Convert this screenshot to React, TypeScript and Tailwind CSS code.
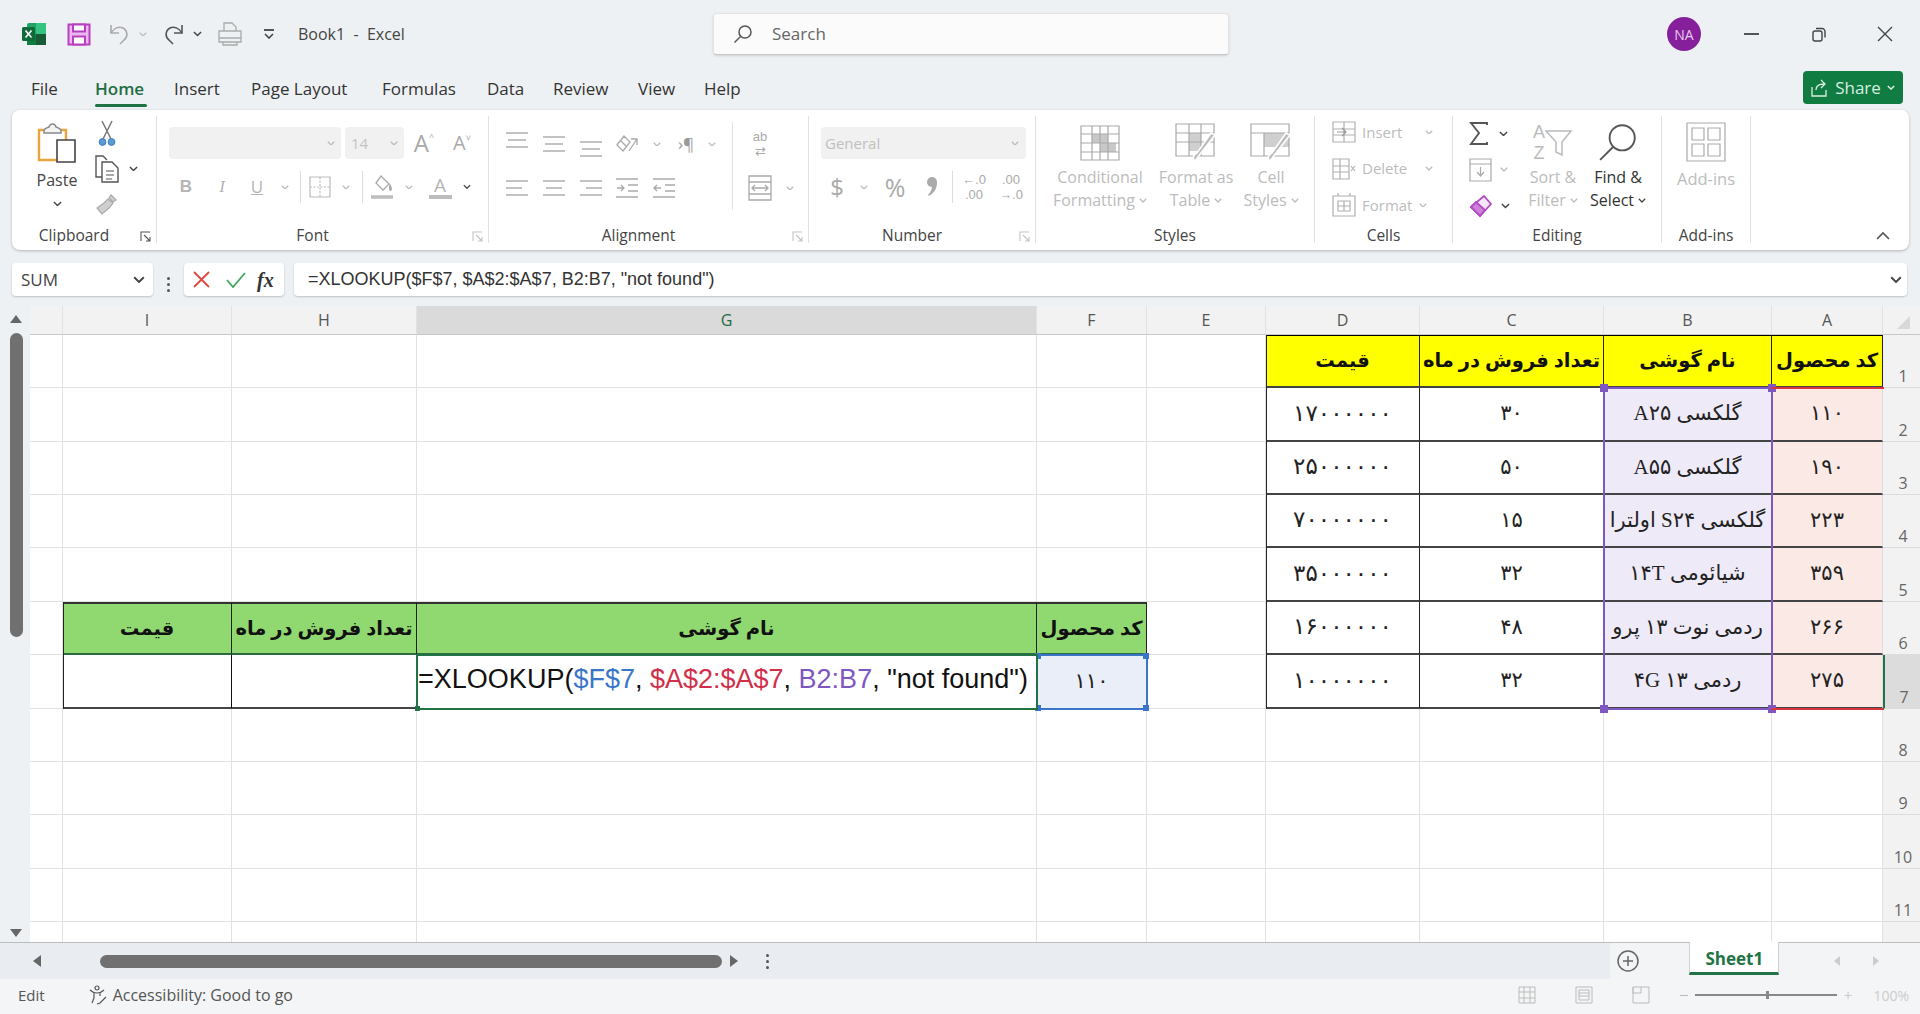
import React from 'react';

const FA = "font-['Liberation_Serif','DejaVu_Sans',serif]";

function Chev({ dark = false, size = 9 }: { dark?: boolean; size?: number }) {
    return (
        <svg width={size} height={size * 0.6} viewBox="0 0 10 6" fill="none" stroke={dark ? '#444' : '#bbb'} strokeWidth="1.6">
            <path d="M1 1l4 4 4-4" />
        </svg>
    );
}

function Launcher({ dark = false }: { dark?: boolean }) {
    return (
        <svg width="12" height="12" viewBox="0 0 12 12" fill="none" stroke={dark ? '#555' : '#c4c4c4'} strokeWidth="1.1">
            <path d="M1 10V1h9" />
            <path d="M4 4l6 6M10 6v4H6" />
        </svg>
    );
}

function Lines({ rows, stroke = '#aaa', w = 22 }: { rows: [number, number][]; stroke?: string; w?: number }) {
    return (
        <svg width={w} height="20" viewBox="0 0 22 20" fill="none" stroke={stroke} strokeWidth="1.4">
            {rows.map(([x1, x2], i) => (
                <path key={i} d={`M${x1} ${3 + i * 7}H${x2}`} />
            ))}
        </svg>
    );
}

function ExcelLogo() {
    return (
        <svg width="24" height="22" viewBox="0 0 24 22">
            <rect x="5" y="0" width="19" height="22" rx="2" fill="#21a366" />
            <rect x="14" y="0" width="10" height="11" fill="#33c481" />
            <rect x="5" y="11" width="9" height="11" fill="#107c41" />
            <rect x="14" y="11" width="10" height="11" fill="#185c37" />
            <rect x="0" y="4" width="13" height="14" rx="1.5" fill="#0f6b39" />
            <path d="M3.5 7.5l6 7M9.5 7.5l-6 7" stroke="#fff" strokeWidth="1.6" />
        </svg>
    );
}

function SaveIcon() {
    return (
        <svg width="24" height="23" viewBox="0 0 24 23" fill="#eab8ee" stroke="#b93fc2" strokeWidth="2">
            <path d="M1.5 1.5h21v20h-21z" />
            <path d="M6 1.5v7h12v-7z" fill="#fff" />
            <path d="M6 21.5v-8h12v8z" fill="#fff" />
        </svg>
    );
}

function UndoIcon({ stroke }: { stroke: string }) {
    return (
        <svg width="22" height="22" viewBox="0 0 22 22" fill="none" stroke={stroke} strokeWidth="1.6">
            <path d="M2 2v8h8" />
            <path d="M2 10c3-5 8-7 12-5 5 3 5 9 1 12l-4 4" />
        </svg>
    );
}

function PrintIcon() {
    return (
        <svg width="24" height="24" viewBox="0 0 24 24" fill="none" stroke="#aaa" strokeWidth="1.3">
            <path d="M6 9V1h8l4 4v4" />
            <path d="M1 9h22v11H1z" />
            <path d="M1 16h22M5 20v3h14v-3" />
        </svg>
    );
}

function SearchIcon({ size = 20, stroke = '#555', sw = 1.5 }: { size?: number; stroke?: string; sw?: number }) {
    return (
        <svg width={size} height={size} viewBox="0 0 20 20" fill="none" stroke={stroke} strokeWidth={sw}>
            <circle cx="12" cy="8" r="6" />
            <path d="M7.5 12.5L1.5 18.5" />
        </svg>
    );
}

function PasteIcon() {
    return (
        <svg width="40" height="42" viewBox="0 0 40 42" fill="none">
            <path d="M2 8h27v30H2z" stroke="#eda33c" strokeWidth="2.4" fill="#fff" />
            <path d="M7 9c0-3 3-3 5-4 1-4 6-4 7 0 2 1 5 1 5 4v2H7z" stroke="#888" strokeWidth="1.4" fill="#f4f4f4" />
            <path d="M20 18h18v22H20z" stroke="#444" strokeWidth="1.6" fill="#fff" />
        </svg>
    );
}

function CutIcon() {
    return (
        <svg width="18" height="28" viewBox="0 0 18 28" fill="none">
            <path d="M4 1l9 18M14 1L5 19" stroke="#777" strokeWidth="1.5" />
            <circle cx="4.5" cy="22" r="3.4" fill="#5a9bd5" stroke="#3d7fbd" />
            <circle cx="13.5" cy="22" r="3.4" fill="#5a9bd5" stroke="#3d7fbd" />
        </svg>
    );
}

function CopyIcon() {
    return (
        <svg width="24" height="28" viewBox="0 0 24 28" fill="none" stroke="#555" strokeWidth="1.4">
            <path d="M8 22H1V1h7l4 4" />
            <path d="M7 7h10l6 6v14H7z" fill="#fff" />
            <path d="M11 16h8M11 20h8M11 24h6" strokeWidth="1" />
        </svg>
    );
}

function BrushIcon() {
    return (
        <svg width="24" height="24" viewBox="0 0 24 24" fill="#cfcfcf" stroke="#aaa" strokeWidth="1.2">
            <path d="M16 3l5 5-3 2-4-4z" />
            <path d="M13 7l5 4-4 5-7 6-5-6 7-5z" />
        </svg>
    );
}

function BorderIcon() {
    return (
        <svg width="24" height="24" viewBox="0 0 24 24" fill="none" stroke="#bbb" strokeWidth="1.2">
            <path d="M2 2h20v20H2z" />
            <path d="M12 2v20M2 12h20" strokeDasharray="2 1.5" />
        </svg>
    );
}

function FillIcon() {
    return (
        <svg width="24" height="26" viewBox="0 0 24 26" fill="none" stroke="#aaa" strokeWidth="1.3">
            <path d="M11 2l8 8-6 6-7-7z" />
            <path d="M20 11c1 2 2 4 1 5s-2-1-1-5z" fill="#aaa" />
            <path d="M1 23h22" strokeWidth="3.5" stroke="#bdbdbd" />
        </svg>
    );
}

function TableIcon() {
    return (
        <svg width="40" height="36" viewBox="0 0 40 36" fill="none" stroke="#a9a9a9" strokeWidth="1.2">
            <path d="M12 9h16v9H12zM12 18h8v9h16v-9z" fill="#c8c8c8" stroke="none" />
            <path d="M1 1h38v34H1zM1 9h38M1 18h38M1 27h38M12 1v34M20 1v34M28 1v34" />
        </svg>
    );
}

function FormatTableIcon({ half = false }: { half?: boolean }) {
    return (
        <svg width="42" height="40" viewBox="0 0 42 40" fill="none" stroke="#a9a9a9" strokeWidth="1.2">
            <path d={half ? 'M14 10h25v14H14z' : 'M14 10h12v18H14z'} fill="#cfcfcf" stroke="none" />
            {half ? <path d="M1 1h38v32H1zM1 10h38M14 10v23" /> : <path d="M1 1h38v32H1zM1 10h38M1 19h38M14 1v32M26 1v32" />}
            <path d="M40 12L26 30l-6 8c-3-2-2-6 2-8l14-20z" fill="#bdbdbd" stroke="#fff" strokeWidth="1.6" />
        </svg>
    );
}

function CellIcon({ kind }: { kind: 'insert' | 'delete' | 'format' }) {
    return (
        <svg width="24" height="24" viewBox="0 0 24 24" fill="none" stroke="#b0b0b0" strokeWidth="1.2">
            {kind === 'insert' && <path d="M1 2h22v20H1zM1 9h22M1 15h22M12 2v20" />}
            {kind === 'insert' && <path d="M5 12h9M10 8l4 4-4 4" stroke="#999" />}
            {kind === 'delete' && <path d="M1 2h16v20H1zM1 9h16M1 15h16M8 2v20M19 9l4 5M23 9l-4 5" />}
            {kind === 'format' && <path d="M1 3h22v20H1zM6 0v3M18 0v3M6 8h12v10H6zM6 13h12M12 8v10" />}
        </svg>
    );
}

function Sigma() {
    return (
        <svg width="20" height="24" viewBox="0 0 20 24" fill="none" stroke="#555" strokeWidth="1.9">
            <path d="M18 3V1H2l8 10L2 22h16v-2" />
        </svg>
    );
}

function FillDown() {
    return (
        <svg width="23" height="24" viewBox="0 0 23 24" fill="none" stroke="#aaa" strokeWidth="1.2">
            <path d="M1 1h21v22H1zM1 6h21" />
            <path d="M11.5 9v9M8 14l3.500 4 3.500-4" />
        </svg>
    );
}

function Eraser() {
    return (
        <svg width="24" height="24" viewBox="0 0 24 24" fill="none" stroke="#b04ac0" strokeWidth="1.8">
            <path d="M15 2l7 8-11 12-9-9z" fill="#f7e6fa" />
            <path d="M2 13l9 9 5-6-9-8z" fill="#cd80d8" />
        </svg>
    );
}

function SortIcon() {
    return (
        <span className="flex items-center">
            <span className="flex flex-col items-center font-['Liberation_Sans'] text-[18px] leading-[21px] text-[#bbb]">
                <span>A</span>
                <span>Z</span>
            </span>
            <svg width="28" height="26" viewBox="0 0 28 26" fill="none" stroke="#bbb" strokeWidth="1.5">
                <path d="M1 1h25L17 12v13l-6-3V12z" />
            </svg>
        </span>
    );
}

function AddinsIcon() {
    return (
        <svg width="40" height="40" viewBox="0 0 40 40" fill="none" stroke="#aaa" strokeWidth="1.2">
            <path d="M1 1h38v38H1z" />
            <path d="M6 6h12v12H6zM22 6h12v12H22zM6 22h12v12H6zM22 22h12v12H22z" />
        </svg>
    );
}

function RibbonGroup({ width, label, launcher, children }: { width: string; label: string; launcher?: 'dark' | 'light'; children: React.ReactNode }) {
    return (
        <div className={`${width} shrink-0 h-full flex flex-col border-r border-[#e1e1e1]`}>
            <div className="h-[111px] flex">{children}</div>
            <div className={`relative flex-1 flex items-center justify-center pt-[1px] text-[15.5px] text-[#444] leading-none ${launcher ? 'pr-[20px]' : ''}`}>
                {label}
                {launcher && (
                    <span className="absolute right-[4px] top-[4px]">
                        <Launcher dark={launcher === 'dark'} />
                    </span>
                )}
            </div>
        </div>
    );
}

function BigLabel({ top, bottom, dark = false }: { top: string; bottom: string; dark?: boolean }) {
    return (
        <div className={`mt-[4px] flex flex-col items-center text-[16px] leading-[23px] whitespace-nowrap ${dark ? 'text-[#333]' : 'text-[#bcbcbc]'}`}>
            <span>{top}</span>
            <span className="flex items-center gap-[4px]">
                {bottom}
                <Chev dark={dark} size={8} />
            </span>
        </div>
    );
}

const tabs = [
    { name: 'File', cls: 'w-[64px]' },
    { name: 'Home', cls: 'w-[79px]' },
    { name: 'Insert', cls: 'w-[77px]' },
    { name: 'Page Layout', cls: 'w-[131px]' },
    { name: 'Formulas', cls: 'w-[105px]' },
    { name: 'Data', cls: 'w-[66px]' },
    { name: 'Review', cls: 'w-[85px]' },
    { name: 'View', cls: 'w-[66px]' },
    { name: 'Help', cls: 'w-[50px]' },
];

const letters = ['', 'I', 'H', 'G', 'F', 'E', 'D', 'C', 'B', 'A'];
const rowCount = 11;

const tableRows: [string, string, string, string][] = [
    ['۱۱۰', 'گلکسی A۲۵', '۳۰', '۱۷۰۰۰۰۰۰'],
    ['۱۹۰', 'گلکسی A۵۵', '۵۰', '۲۵۰۰۰۰۰۰'],
    ['۲۲۳', 'گلکسی S۲۴ اولترا', '۱۵', '۷۰۰۰۰۰۰۰'],
    ['۳۵۹', 'شیائومی ۱۴T', '۳۲', '۳۵۰۰۰۰۰۰'],
    ['۲۶۶', 'ردمی نوت ۱۳ پرو', '۴۸', '۱۶۰۰۰۰۰۰'],
    ['۲۷۵', 'ردمی ۱۳ ۴G', '۳۲', '۱۰۰۰۰۰۰۰'],
];

const yellowHeads: Record<number, string> = { 6: 'قیمت', 7: 'تعداد فروش در ماه', 8: 'نام گوشی', 9: 'کد محصول' };
const greenHeads: Record<number, string> = { 1: 'قیمت', 2: 'تعداد فروش در ماه', 3: 'نام گوشی', 4: 'کد محصول' };

function cellClass(r: number, c: number) {
    if (r === 1 && c >= 6) return 'bg-[#ffff00] border-r border-b-2 border-t border-t-black border-r-[#222] border-b-[#444]';
    if (r >= 2 && r <= 7 && c === 9) return 'bg-[#fbe9e6] border-r border-b-2 border-r-[#ddd] border-b-[#444]';
    if (r >= 2 && r <= 7 && c === 8) return 'bg-[#eeeaf8] border-r border-b-2 border-r-[#222] border-b-[#444]';
    if (r >= 2 && r <= 7 && c >= 6) return 'bg-white border-r border-b-2 border-r-[#222] border-b-[#444]';
    if (r === 6 && c >= 1 && c <= 4) return 'bg-[#90d971] border-r border-b-2 border-t-2 border-t-[#333] border-r-[#222] border-b-[#2c6b3d]';
    if (r === 7 && c >= 1 && c <= 2) return 'bg-white border-r border-b-2 border-r-[#111] border-b-[#444]';
    if (r === 7 && c === 4) return 'bg-[#e9eef8] border-r border-b-[#ddd] border-b border-r-[#ddd]';
    return 'bg-white border-r border-b border-[#e2e2e2]';
}

function cellBody(r: number, c: number) {
    if (r === 1 && yellowHeads[c]) return <span className="font-bold text-[19.5px] text-[#111]">{yellowHeads[c]}</span>;
    if (r === 6 && greenHeads[c]) return <span className="font-bold text-[19.5px] text-[#111]">{greenHeads[c]}</span>;
    if (r === 7 && c === 4) return <span className="text-[21px] text-[#222]">۱۱۰</span>;
    if (r >= 2 && r <= 7 && c === 6) return <span className="text-[23px] tracking-[0.4px] text-[#222]">{tableRows[r - 2][3]}</span>;
    if (r >= 2 && r <= 7 && c >= 7) return <span className="text-[21px] text-[#222]">{tableRows[r - 2][9 - c]}</span>;
    return null;
}

export default function App() {
    const rows = Array.from({ length: rowCount }, (_, i) => i + 1);

    return (
        <div className="w-[1920px] h-[1014px] overflow-hidden bg-[#eef1f4] flex flex-col font-['Open_Sans','Liberation_Sans',sans-serif] text-[#333]">
            {/* Title bar */}
            <div className="h-[66px] pt-[2px] flex items-center shrink-0">
                <div className="w-[713px] flex items-center pl-[22px]">
                    <ExcelLogo />
                    <span className="ml-[21px]"><SaveIcon /></span>
                    <span className="ml-[18px]"><UndoIcon stroke="#aaa" /></span>
                    <span className="ml-[8px]"><Chev size={8} /></span>
                    <span className="ml-[15px] -scale-x-100"><UndoIcon stroke="#555" /></span>
                    <span className="ml-[9px]"><Chev dark /></span>
                    <span className="ml-[16px]"><PrintIcon /></span>
                    <span className="ml-[22px] flex flex-col items-center gap-[2px]">
                        <span className="block w-[10px] h-[1.5px] bg-[#555]" />
                        <Chev dark size={10} />
                    </span>
                    <span className="ml-[24px] text-[16px] text-[#444] whitespace-pre">Book1  -  Excel</span>
                </div>
                <div className="w-[516px] h-[42px] bg-[#fbfbfb] border border-[#e3e3e3] border-b-[#c8c8c8] rounded-[4px] flex items-center pl-[19px] gap-[19px] shadow-sm text-[#666] text-[17px]">
                    <SearchIcon />
                    Search
                </div>
                <div className="flex-1 flex items-center">
                    <div className="ml-[438px] w-[34px] h-[34px] rounded-full bg-[#861f9c] text-[#e7c8ee] text-[14px] flex items-center justify-center">NA</div>
                    <span className="ml-[43px] w-[15px] h-[1.5px] bg-[#555]" />
                    <svg className="ml-[52px]" width="16" height="16" viewBox="0 0 16 16" fill="none" stroke="#444" strokeWidth="1.4">
                        <rect x="2" y="5" width="9" height="10" rx="2" />
                        <path d="M5 2.500h6a3 3 0 013 3v6" />
                    </svg>
                    <svg className="ml-[50px]" width="16" height="16" viewBox="0 0 16 16" fill="none" stroke="#444" strokeWidth="1.4">
                        <path d="M1 1l14 14M15 1L1 15" />
                    </svg>
                </div>
            </div>

            {/* Tabs */}
            <div className="h-[44px] flex items-center pl-[31px] shrink-0 relative">
                {tabs.map((t) => (
                    <span key={t.name} className={`${t.cls} relative text-[17px] leading-none whitespace-nowrap ${t.name === 'Home' ? 'text-[#1f6e43] font-semibold' : ''}`}>
                        {t.name}
                        {t.name === 'Home' && <span className="absolute left-0 w-[52px] top-[24px] h-[3px] bg-[#217346] rounded-sm" />}
                    </span>
                ))}
                <div className="ml-auto mr-[17px] -mt-[1px] w-[100px] h-[33px] bg-[#107c41] rounded-[4px] flex items-center justify-center gap-[6px] text-[#d8eee0] text-[17px]">
                    <svg width="18" height="18" viewBox="0 0 18 18" fill="none" stroke="#d8eee0" strokeWidth="1.3">
                        <path d="M1 8v9h14v-6M5 11c0-4 3-6 8-6M10 1l4 4-4 4" />
                    </svg>
                    Share
                    <svg width="8" height="5" viewBox="0 0 10 6" fill="none" stroke="#d8eee0" strokeWidth="1.8"><path d="M1 1l4 4 4-4" /></svg>
                </div>
            </div>

            {/* Ribbon */}
            <div className="mx-[12px] h-[140px] w-[1897px] shrink-0 bg-white rounded-[8px] shadow-[0_1px_3px_rgba(0,0,0,0.25)] pt-[6px] pb-[7px] flex relative">
                <RibbonGroup width="w-[145px]" label="Clipboard" launcher="dark">
                    <div className="w-[76px] ml-[7px] flex flex-col items-center pt-[6px]">
                        <PasteIcon />
                        <span className="text-[16px] leading-none mt-[8px] text-[#444]">Paste</span>
                        <span className="mt-[13px]"><Chev dark /></span>
                    </div>
                    <div className="flex flex-col">
                        <span className="h-[35px] w-[24px] flex items-center justify-center"><CutIcon /></span>
                        <span className="h-[35px] flex items-center">
                            <span className="w-[24px] flex justify-center"><CopyIcon /></span>
                            <span className="ml-[10px]"><Chev dark /></span>
                        </span>
                        <span className="h-[35px] w-[24px] flex items-center justify-center"><BrushIcon /></span>
                    </div>
                </RibbonGroup>

                <RibbonGroup width="w-[332px]" label="Font" launcher="light">
                    <div className="pl-[12px] pt-[11px] flex flex-col">
                        <div className="flex items-center h-[32px]">
                            <div className="w-[172px] h-[32px] bg-[#f1f1f1] rounded-[4px] flex items-center justify-end pr-[6px]"><Chev size={8} /></div>
                            <div className="ml-[4px] w-[59px] h-[32px] bg-[#f1f1f1] rounded-[4px] flex items-center justify-between px-[6px] text-[15px] text-[#c4c4c4]">14<Chev size={8} /></div>
                            <span className="w-[38px] flex justify-center items-start text-[24px] leading-none text-[#a9a9a9] ml-[1px]">A<span className="text-[9px] leading-[12px]">^</span></span>
                            <span className="w-[38px] flex justify-center items-start text-[20px] leading-none text-[#a9a9a9]">A<span className="text-[9px] leading-[10px]">˅</span></span>
                        </div>
                        <div className="mt-[12px] flex items-center h-[32px] text-[#b5b5b5]">
                            <span className="w-[34px] text-center text-[17px] font-bold font-['Liberation_Sans']">B</span>
                            <span className="w-[38px] text-center text-[17px] italic font-['Liberation_Serif']">I</span>
                            <span className="w-[32px] text-center text-[17px] underline">U</span>
                            <span className="w-[24px] flex justify-center"><Chev size={8} /></span>
                            <span className="ml-[3px] w-px h-[32px] bg-[#ddd]" />
                            <span className="w-[38px] flex justify-center"><BorderIcon /></span>
                            <span className="w-[14px] flex justify-center"><Chev size={8} /></span>
                            <span className="ml-[9px] w-px h-[32px] bg-[#ddd]" />
                            <span className="w-[38px] flex justify-center"><FillIcon /></span>
                            <span className="w-[16px] flex justify-center"><Chev size={8} /></span>
                            <span className="w-[46px] flex flex-col items-center text-[19px] leading-[20px]">A<span className="block w-[23px] h-[4px] bg-[#bdbdbd]" /></span>
                            <span className="w-[8px] flex justify-center"><Chev dark size={9} /></span>
                        </div>
                    </div>
                </RibbonGroup>

                <RibbonGroup width="w-[320px]" label="Alignment" launcher="light">
                    <div className="w-[244px] h-[88px] mt-[6px] pl-[10px] border-r border-[#e1e1e1] flex flex-col">
                        <div className="h-[44px] flex items-center">
                            <span className="w-[36px] flex justify-center -mt-[9px]"><Lines rows={[[0, 22], [2, 20], [0, 22]]} /></span>
                            <span className="w-[37px] flex justify-center"><Lines rows={[[0, 22], [2, 20], [0, 22]]} /></span>
                            <span className="w-[37px] flex justify-center mt-[9px]"><Lines rows={[[0, 22], [2, 20], [0, 22]]} /></span>
                            <span className="w-[36px] flex justify-center">
                                <svg width="24" height="22" viewBox="0 0 24 22" fill="none" stroke="#aaa" strokeWidth="1.3"><path d="M2 12l7-9 6 6-7 9zM6 8l5 5M14 18l8-12M22 12V6h-6" /></svg>
                            </span>
                            <span className="w-[24px] flex justify-center"><Chev size={8} /></span>
                            <span className="w-[34px] text-center text-[17px] text-[#999]">›¶</span>
                            <span className="w-[18px] flex justify-center"><Chev size={8} /></span>
                        </div>
                        <div className="h-[44px] flex items-center">
                            <span className="w-[36px] flex justify-center"><Lines rows={[[0, 22], [0, 16], [0, 22]]} /></span>
                            <span className="w-[37px] flex justify-center"><Lines rows={[[0, 22], [3, 19], [0, 22]]} /></span>
                            <span className="w-[37px] flex justify-center"><Lines rows={[[0, 22], [6, 22], [0, 22]]} /></span>
                            <span className="w-[36px] flex justify-center">
                                <svg width="22" height="22" viewBox="0 0 22 22" fill="none" stroke="#aaa" strokeWidth="1.3"><path d="M0 2h22M0 20h22M12 8h10M12 14h10M1 11h7M5 8l3 3-3 3" /></svg>
                            </span>
                            <span className="w-[37px] flex justify-center">
                                <svg width="22" height="22" viewBox="0 0 22 22" fill="none" stroke="#aaa" strokeWidth="1.3"><path d="M0 2h22M0 20h22M12 8h10M12 14h10M1 11h7M4 8l-3 3 3 3" /></svg>
                            </span>
                        </div>
                    </div>
                    <div className="pl-[15px] flex flex-col text-[#aaa] mt-[6px]">
                        <div className="h-[44px] flex items-center">
                            <span className="w-[24px] font-['Liberation_Sans'] text-[13px] leading-[15px] text-center">ab<br />⇄</span>
                        </div>
                        <div className="h-[44px] flex items-center gap-[14px]">
                            <svg width="24" height="26" viewBox="0 0 24 26" fill="none" stroke="#aaa" strokeWidth="1.3"><path d="M1 1h22v24H1zM1 7h22M1 19h22M4 13h16M7 10l-3 3 3 3M17 10l3 3-3 3" /></svg>
                            <Chev size={8} />
                        </div>
                    </div>
                </RibbonGroup>

                <RibbonGroup width="w-[227px]" label="Number" launcher="light">
                    <div className="pl-[12px] pt-[11px] flex flex-col">
                        <div className="w-[205px] h-[32px] bg-[#f1f1f1] rounded-[4px] flex items-center justify-between pl-[4px] pr-[7px] text-[15px] text-[#c0c0c0]">General<Chev size={8} /></div>
                        <div className="mt-[12px] h-[32px] flex items-center text-[#aaa]">
                            <span className="w-[32px] text-center text-[24px] leading-none">$</span>
                            <span className="w-[22px] flex justify-center"><Chev size={8} /></span>
                            <span className="w-[40px] text-center text-[25px] leading-none">%</span>
                            <span className="w-[34px] flex justify-center">
                                <svg width="12" height="22" viewBox="0 0 12 22" fill="#aaa"><circle cx="6" cy="6" r="5" /><path d="M11 6c0 7-3 11-8 14l-1-1c3-3 4-6 4-9z" /></svg>
                            </span>
                            <span className="ml-[3px] w-px h-[32px] bg-[#ddd]" />
                            <span className="w-[42px] text-center font-['Liberation_Sans'] text-[13px] leading-[15px]">←.0<br />.00</span>
                            <span className="w-[32px] text-center font-['Liberation_Sans'] text-[13px] leading-[15px]">.00<br />→.0</span>
                        </div>
                    </div>
                </RibbonGroup>

                <RibbonGroup width="w-[279px]" label="Styles">
                    <div className="w-[118px] ml-[5px] flex flex-col items-center pt-[8px]">
                        <div className="h-[38px] flex items-center"><TableIcon /></div>
                        <BigLabel top="Conditional" bottom="Formatting" />
                    </div>
                    <div className="w-[74px] flex flex-col items-center pt-[8px]">
                        <div className="h-[38px] flex items-center"><FormatTableIcon /></div>
                        <BigLabel top="Format as" bottom="Table" />
                    </div>
                    <div className="w-[76px] flex flex-col items-center pt-[8px]">
                        <div className="h-[38px] flex items-center"><FormatTableIcon half /></div>
                        <BigLabel top="Cell" bottom="Styles" />
                    </div>
                </RibbonGroup>

                <RibbonGroup width="w-[138px]" label="Cells">
                    <div className="pl-[17px] -mt-[2px] flex flex-col text-[15px] text-[#bcbcbc]">
                        <div className="h-[36px] flex items-center"><CellIcon kind="insert" /><span className="ml-[6px] w-[63px]">Insert</span><Chev size={8} /></div>
                        <div className="h-[37px] flex items-center"><CellIcon kind="delete" /><span className="ml-[6px] w-[63px]">Delete</span><Chev size={8} /></div>
                        <div className="h-[36px] flex items-center"><CellIcon kind="format" /><span className="ml-[6px] w-[57px]">Format</span><Chev size={8} /></div>
                    </div>
                </RibbonGroup>

                <RibbonGroup width="w-[209px]" label="Editing">
                    <div className="w-[64px] pl-[16px] flex flex-col">
                        <div className="h-[35px] flex items-center gap-[10px]"><Sigma /><Chev dark /></div>
                        <div className="h-[37px] flex items-center gap-[8px]"><FillDown /><Chev size={8} /></div>
                        <div className="h-[36px] flex items-center gap-[8px]"><Eraser /><Chev dark /></div>
                    </div>
                    <div className="w-[60px] flex flex-col items-center pt-[7px] ml-[6px]">
                        <div className="h-[39px] flex items-center"><SortIcon /></div>
                        <BigLabel top="Sort &" bottom="Filter" />
                    </div>
                    <div className="w-[64px] flex flex-col items-center pt-[5px] ml-[3px]">
                        <div className="h-[41px] flex items-center"><SearchIcon size={42} stroke="#555" sw={0.9} /></div>
                        <BigLabel top="Find &" bottom="Select" dark />
                    </div>
                </RibbonGroup>

                <RibbonGroup width="w-[89px]" label="Add-ins">
                    <div className="w-full flex flex-col items-center pt-[6px] text-[16.5px] text-[#bcbcbc]">
                        <AddinsIcon />
                        <span className="mt-[6px] leading-[22px]">Add-ins</span>
                    </div>
                </RibbonGroup>

                <svg className="absolute right-[19px] bottom-[10px]" width="14" height="9" viewBox="0 0 14 9" fill="none" stroke="#555" strokeWidth="1.6"><path d="M1 8l6-6 6 6" /></svg>
            </div>

            {/* Formula bar */}
            <div className="h-[56px] pt-[13px] pl-[12px] flex shrink-0">
                <div className="w-[141px] h-[33px] bg-white rounded-[4px] shadow-[0_1px_2px_rgba(0,0,0,0.2)] flex items-center justify-between pl-[9px] pr-[8px] text-[17px] text-[#444]">
                    SUM
                    <Chev dark size={12} />
                </div>
                <div className="w-[31px] flex flex-col items-center justify-center gap-[3px]">
                    <span className="w-[3px] h-[3px] rounded-full bg-[#555]" />
                    <span className="w-[3px] h-[3px] rounded-full bg-[#555]" />
                    <span className="w-[3px] h-[3px] rounded-full bg-[#555]" />
                </div>
                <div className="w-[100px] h-[33px] bg-white rounded-[4px] shadow-[0_1px_2px_rgba(0,0,0,0.2)] flex items-center pl-[9px]">
                    <svg width="17" height="17" viewBox="0 0 17 17" fill="none" stroke="#e0483e" strokeWidth="1.8"><path d="M1 1l15 15M16 1L1 16" /></svg>
                    <svg className="ml-[16px]" width="20" height="16" viewBox="0 0 20 16" fill="none" stroke="#3fa85f" strokeWidth="1.8"><path d="M1 8l6 7L19 1" /></svg>
                    <span className="ml-[11px] font-['Liberation_Serif'] italic font-bold text-[20px] text-[#333] leading-none">fx</span>
                </div>
                <div className="ml-[10px] w-[1613px] h-[33px] bg-white rounded-[4px] shadow-[0_1px_2px_rgba(0,0,0,0.2)] flex items-center justify-between pl-[14px] pr-[5px] text-[18px] text-[#333] font-['Liberation_Sans']">
                    {'=XLOOKUP($F$7, $A$2:$A$7, B2:B7, "not found")'}
                    <Chev dark size={12} />
                </div>
            </div>

            {/* Sheet */}
            <div className="h-[636px] flex shrink-0">
                <div className="w-[30px] flex flex-col items-center pl-[2px] relative">
                    <span className="mt-[9px] w-0 h-0 border-x-[6px] border-x-transparent border-b-[8px] border-b-[#666]" />
                    <span className="mt-[10px] w-[13px] h-[304px] bg-[#707070] rounded-full" />
                    <span className="mt-auto mb-[5px] w-0 h-0 border-x-[6px] border-x-transparent border-t-[8px] border-t-[#666]" />
                </div>
                <div className="relative flex-1 grid grid-cols-[33px_169px_185px_620px_110px_119px_154px_184px_168px_111px_37px] grid-rows-[29px_53px_54px_53px_53px_54px_53px_54px_53px_53px_54px_53px_20px]">
                    {letters.map((l, i) => (
                        <div key={i} className={`flex items-center justify-center text-[16px] border-r border-b border-b-[#c8c8c8] border-r-[#e2e2e2] ${l === 'G' ? 'bg-[#dadada] text-[#1e6b44]' : 'bg-[#f2f2f2] text-[#555]'}`}>{l}</div>
                    ))}
                    <div className="bg-[#f2f2f2] border-b border-[#c8c8c8] flex items-end justify-end pr-[10px] pb-[5px]">
                        <span className="w-0 h-0 border-l-[13px] border-l-transparent border-b-[13px] border-b-[#d8d8d8]" />
                    </div>

                    {rows.map((r) => (
                        <React.Fragment key={r}>
                            {letters.map((_, c) => (
                                <div key={c} className={`flex items-center justify-center overflow-hidden whitespace-nowrap ${FA} ${cellClass(r, c)}`} dir="rtl">
                                    {cellBody(r, c)}
                                </div>
                            ))}
                            <div className={`flex items-end justify-center pl-[3px] pb-[3px] text-[16px] leading-[16px] text-[#666] border-b border-[#dcdcdc] ${r === 7 ? 'bg-[#dcdcdc] border-l-2 border-l-[#217346] text-[#1e6b44]' : 'bg-[#f2f2f2]'}`}>{r}</div>
                        </React.Fragment>
                    ))}
                    {letters.map((_, c) => (
                        <div key={c} className="bg-white border-r border-[#e2e2e2]" />
                    ))}
                    <div className="bg-[#f2f2f2]" />

                    {/* table edges */}
                    <div className="absolute inset-0 col-start-7 col-end-8 row-start-2 row-end-9 border-l border-[#222] pointer-events-none" />
                    <div className="absolute inset-0 col-start-2 col-end-3 row-start-7 row-end-9 border-l border-[#222] pointer-events-none" />

                    {/* reference frames */}
                    <div className="absolute -inset-px col-start-9 col-end-10 row-start-3 row-end-9 border-2 border-[#7e57c2] pointer-events-none">
                        <span className="absolute -left-[5px] -top-[5px] w-[8px] h-[8px] bg-[#7e57c2]" />
                        <span className="absolute -right-[5px] -top-[5px] w-[8px] h-[8px] bg-[#7e57c2]" />
                        <span className="absolute -left-[5px] -bottom-[5px] w-[8px] h-[8px] bg-[#7e57c2]" />
                        <span className="absolute -right-[5px] -bottom-[5px] w-[8px] h-[8px] bg-[#7e57c2]" />
                    </div>
                    <div className="absolute -inset-px col-start-10 col-end-11 row-start-3 row-end-9 border-y-2 border-[#d8353f] pointer-events-none" />
                    <div className="absolute -inset-px col-start-5 col-end-6 row-start-8 row-end-9 border-2 border-[#3a75c9] pointer-events-none">
                        <span className="absolute -left-[3px] -top-[3px] w-[6px] h-[6px] bg-[#3a75c9]" />
                        <span className="absolute -right-[3px] -top-[3px] w-[6px] h-[6px] bg-[#3a75c9]" />
                        <span className="absolute -left-[3px] -bottom-[3px] w-[6px] h-[6px] bg-[#3a75c9]" />
                        <span className="absolute -right-[3px] -bottom-[3px] w-[6px] h-[6px] bg-[#3a75c9]" />
                    </div>
                    <div className="absolute -inset-px col-start-4 col-end-5 row-start-8 row-end-9 border-2 border-[#217346] bg-white flex items-center justify-center pb-[5px] pr-[8px] font-['Liberation_Sans'] text-[27px] text-[#111] whitespace-nowrap overflow-visible">
                        <span>
                            =XLOOKUP(<span className="text-[#3a75c9]">$F$7</span>, <span className="text-[#d0304a]">$A$2:$A$7</span>, <span className="text-[#7e57c2]">B2:B7</span>, "not found")
                        </span>
                        <span className="absolute -left-[3px] -bottom-[3px] w-[5px] h-[5px] bg-[#217346]" />
                    </div>
                </div>
            </div>

            {/* Sheet tabs / horizontal scrollbar */}
            <div className="h-[37px] flex items-center shrink-0 border-t border-[#bdbdbd] bg-[#e9edf1]">
                <span className="ml-[33px] w-0 h-0 border-y-[6px] border-y-transparent border-r-[8px] border-r-[#666]" />
                <span className="ml-[59px] w-[623px] h-[13px] rounded-full bg-[#707070]" />
                <span className="ml-[8px] w-0 h-0 border-y-[6px] border-y-transparent border-l-[8px] border-l-[#666]" />
                <div className="ml-[28px] flex flex-col gap-[3px]">
                    <span className="w-[3px] h-[3px] rounded-full bg-[#555]" />
                    <span className="w-[3px] h-[3px] rounded-full bg-[#555]" />
                    <span className="w-[3px] h-[3px] rounded-full bg-[#555]" />
                </div>
                <div className="ml-[841px] h-full w-[310px] bg-[#f3f4f5] flex items-center pl-[7px]">
                    <svg width="22" height="22" viewBox="0 0 22 22" fill="none" stroke="#666" strokeWidth="1.5"><circle cx="11" cy="11" r="10" /><path d="M11 6v10M6 11h10" /></svg>
                    <div className="ml-[50px] -mt-px w-[90px] h-[33px] self-start bg-white border-x border-[#cfcfcf] border-b-[3px] border-b-[#217346] flex items-center justify-center pt-[4px] font-bold text-[17px] text-[#217346]">Sheet1</div>
                    <span className="ml-[55px] w-0 h-0 border-y-[5px] border-y-transparent border-r-[6px] border-r-[#ccc]" />
                    <span className="ml-[33px] w-0 h-0 border-y-[5px] border-y-transparent border-l-[6px] border-l-[#ccc]" />
                </div>
            </div>

            {/* Status bar */}
            <div className="flex-1 flex items-center bg-[#f4f5f6] text-[15px] text-[#555] pl-[18px] pb-[3px]">
                <span>Edit</span>
                <svg className="ml-[43px]" width="20" height="20" viewBox="0 0 20 20" fill="none" stroke="#555" strokeWidth="1.2">
                    <circle cx="9" cy="3" r="2" /><path d="M2 5c2 2 4 3 7 3s5-1 7-3M6 8v5l-2 5M12 8v3M9 19l3-1 6-6" />
                </svg>
                <span className="ml-[5px] text-[16px]">Accessibility: Good to go</span>
                <div className="ml-auto flex items-center text-[#bbb]">
                    <svg width="18" height="18" viewBox="0 0 18 18" fill="none" stroke="#bbb"><path d="M1 1h16v16H1zM1 6h16M1 12h16M6 1v16M12 1v16" /></svg>
                    <svg className="ml-[39px]" width="18" height="18" viewBox="0 0 18 18" fill="none" stroke="#bbb"><path d="M1 1h16v16H1zM4 4h10v10H4zM4 7h10M4 10h10" /></svg>
                    <svg className="ml-[39px]" width="18" height="18" viewBox="0 0 18 18" fill="none" stroke="#bbb"><path d="M1 1h16v16H1zM1 1v6h8V1" /></svg>
                    <span className="ml-[30px] w-[8px] h-px bg-[#bbb]" />
                    <span className="ml-[7px] relative w-[142px] h-[2px] bg-[#888]">
                        <span className="absolute left-[71px] -top-[3px] w-[3px] h-[8px] bg-[#888]" />
                    </span>
                    <span className="ml-[7px] text-[#ccc]">+</span>
                    <span className="ml-[21px] mr-[11px] text-[14px] text-[#ccc]">100%</span>
                </div>
            </div>
        </div>
    );
}
